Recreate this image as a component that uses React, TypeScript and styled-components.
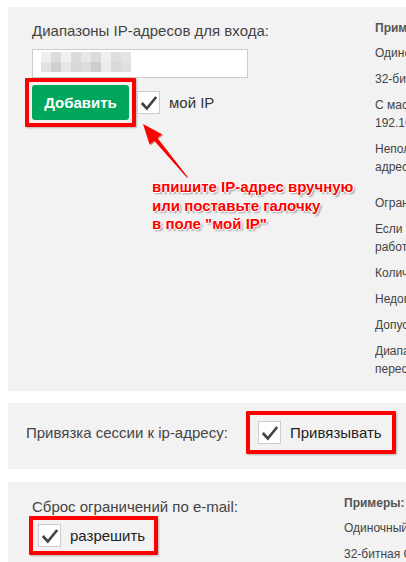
import styled, { createGlobalStyle } from "styled-components";

const GlobalStyle = createGlobalStyle`
  html, body {
    margin: 0;
    padding: 0;
    background: #fff;
    overflow: hidden;
    font-family: "Liberation Sans", Arial, sans-serif;
  }
`;

const Page = styled.div`
  padding: 7px 0 0 8px;
  width: 600px;
`;

const Panel = styled.section<{ $cols: string; $bottom?: number }>`
  position: relative;
  display: grid;
  grid-template-columns: ${(p) => p.$cols};
  background: #f2f2f2;
  padding: 12px 0 ${(p) => p.$bottom ?? 13}px 24px;
  margin-bottom: 12px;
`;

const InlinePanel = styled.section`
  display: flex;
  align-items: center;
  background: #f2f2f2;
  padding: 8px 0 15px 18px;
  margin-bottom: 13px;
`;

const LeftCol = styled.div<{ $top?: number }>`
  display: flex;
  flex-direction: column;
  align-items: flex-start;
  padding-top: ${(p) => p.$top ?? 0}px;
`;

const FieldLabel = styled.div<{ $width?: number }>`
  font-size: 15px;
  line-height: 18px;
  color: #444;
  ${(p) => (p.$width ? `width: ${p.$width}px;` : "")}
`;

const Input = styled.div`
  box-sizing: border-box;
  margin-top: 9px;
  width: 216px;
  height: 29px;
  background: #fff;
  border: 1px solid #ccc;
  padding: 2px 0 0 8px;
`;

const Row = styled.div`
  display: flex;
  align-items: center;
`;

const Highlight = styled.div<{ $pad: string; $shift?: number }>`
  display: flex;
  align-items: center;
  border: 4px solid #ff0000;
  border-radius: 1px;
  padding: ${(p) => p.$pad};
  margin-left: ${(p) => p.$shift ?? 0}px;
  box-shadow: 1px 1px 2px rgba(0, 0, 0, 0.25);
`;

const AddButton = styled.button`
  width: 97px;
  height: 35px;
  border: none;
  border-radius: 3px;
  background: #00a65a;
  color: #fff;
  font-family: "Liberation Sans", Arial, sans-serif;
  font-size: 15px;
  font-weight: 700;
  padding: 0;
`;

const Box = styled.span<{ $gap?: number }>`
  box-sizing: border-box;
  display: inline-flex;
  align-items: center;
  justify-content: center;
  width: 23px;
  height: 23px;
  margin-left: ${(p) => p.$gap ?? 0}px;
  background: #fff;
  border: 1px solid #ccc;
  flex: none;
`;

const CheckText = styled.span<{ $gap: number; $color?: string }>`
  margin-left: ${(p) => p.$gap}px;
  font-size: 15px;
  line-height: 18px;
  color: ${(p) => p.$color ?? "#333"};
  white-space: nowrap;
`;

const Hints = styled.div`
  font-size: 12px;
  line-height: 18px;
  color: #444;
  white-space: nowrap;
  overflow: hidden;

  h4 {
    margin: 0 0 7px;
    font-size: 12px;
    color: #555;
  }

  p {
    margin: 0 0 8px;
  }

  p.section {
    margin-top: 18px;
  }
`;

const Arrow = styled.svg`
  position: absolute;
  left: 127px;
  top: 111px;
  width: 62px;
  height: 66px;
  overflow: visible;
`;

const Note = styled.div`
  position: absolute;
  left: 144px;
  top: 171px;
  font-size: 15px;
  line-height: 18.5px;
  font-weight: 700;
  color: #ff0000;
  white-space: nowrap;
  text-shadow: 1px 0 0 #fff, -1px 0 0 #fff, 0 1px 0 #fff, 0 -1px 0 #fff,
    2px 2px 2px rgba(0, 0, 0, 0.35);
`;

function Check({ gap }: { gap?: number }) {
  return (
    <Box $gap={gap}>
      <svg width="18" height="16" viewBox="0 0 18 16">
        <path d="M1.8 8 L6.8 13.5 L16.2 2" fill="none" stroke="#444" strokeWidth="2.7" />
      </svg>
    </Box>
  );
}

const mosaic = [
  ["#eeeeee", "#dcdcdc", "#f0f0f0", "#dadada", "#e8e8e8", "#dcdcdc", "#efefef", "#dedede", "#e4e4e4"],
  ["#e2e2e2", "#cfcfcf", "#e6e6e6", "#d8d8d8", "#dddddd", "#cdcdcd", "#ebebeb", "#d9d9d9", "#e0e0e0"],
];

function Blurred() {
  return (
    <svg width="90" height="20" viewBox="0 0 90 20">
      {mosaic.map((row, r) =>
        row.map((c, i) => <rect key={r + "-" + i} x={i * 10} y={r * 10} width="10" height="10" fill={c} />)
      )}
    </svg>
  );
}

export default function App() {
  return (
    <>
      <GlobalStyle />
      <Page>
        <Panel $cols="343px 1fr">
          <LeftCol $top={3}>
            <FieldLabel>Диапазоны IP-адресов для входа:</FieldLabel>
            <Input>
              <Blurred />
            </Input>
            <Row>
              <Highlight $pad="3px" $shift={-7}>
                <AddButton>Добавить</AddButton>
              </Highlight>
              <Check gap={1} />
              <CheckText $gap={9}>мой IP</CheckText>
            </Row>
          </LeftCol>
          <Hints>
            <h4>Примеры:</h4>
            <p>Одиночный IP-адрес: 192.168.0.1</p>
            <p>32-битная маска: 192.168.0.1/32</p>
            <p>
              С маской подсети:
              <br />
              192.168.0.0/24
            </p>
            <p>
              Неполный IP-адрес или
              <br />
              адрес вида 192.168.0.*
            </p>
            <p className="section">Ограничения:</p>
            <p>
              Если IP-адрес динамический,
              <br />
              работа может быть невозможна
            </p>
            <p>Количество диапазонов не ограничено</p>
            <p>Недопустимо указывать 0.0.0.0</p>
            <p>Допускается маска от /16 до /32</p>
            <p style={{ marginBottom: 0 }}>
              Диапазоны не должны
              <br />
              пересекаться
            </p>
          </Hints>
          <Arrow viewBox="0 0 62 66">
            <polygon
              points="9,7 28,17.3 23.3,21.1 53.4,59.7 52.6,60.3 20.3,23.7 15.6,27.5"
              fill="#9a0000"
              opacity="0.45"
            />
            <polygon
              points="8,6 27,16.3 22.3,20.1 52.4,58.7 51.6,59.3 19.3,22.7 14.6,26.5"
              fill="#ff0000"
            />
          </Arrow>
          <Note>
            впишите IP-адрес вручную
            <br />
            или поставьте галочку
            <br />в поле "мой IP"
          </Note>
        </Panel>

        <InlinePanel>
          <FieldLabel $width={220}>Привязка сессии к ip-адресу:</FieldLabel>
          <Highlight $pad="6px 10px 6px 8px">
            <Check />
            <CheckText $gap={9} $color="#222">
              Привязывать
            </CheckText>
          </Highlight>
        </InlinePanel>

        <Panel $cols="312px 1fr" $bottom={40}>
          <LeftCol $top={4}>
            <FieldLabel>Сброс ограничений по e-mail:</FieldLabel>
            <Highlight $pad="4px 9px 4px 5px" $shift={-3}>
              <Check />
              <CheckText $gap={9} $color="#222">
                разрешить
              </CheckText>
            </Highlight>
          </LeftCol>
          <Hints>
            <h4>Примеры:</h4>
            <p>Одиночный IP-адрес: 192.168.0.1</p>
            <p>32-битная CIDR-маска: 192.168.0.1/32</p>
          </Hints>
        </Panel>
      </Page>
    </>
  );
}
